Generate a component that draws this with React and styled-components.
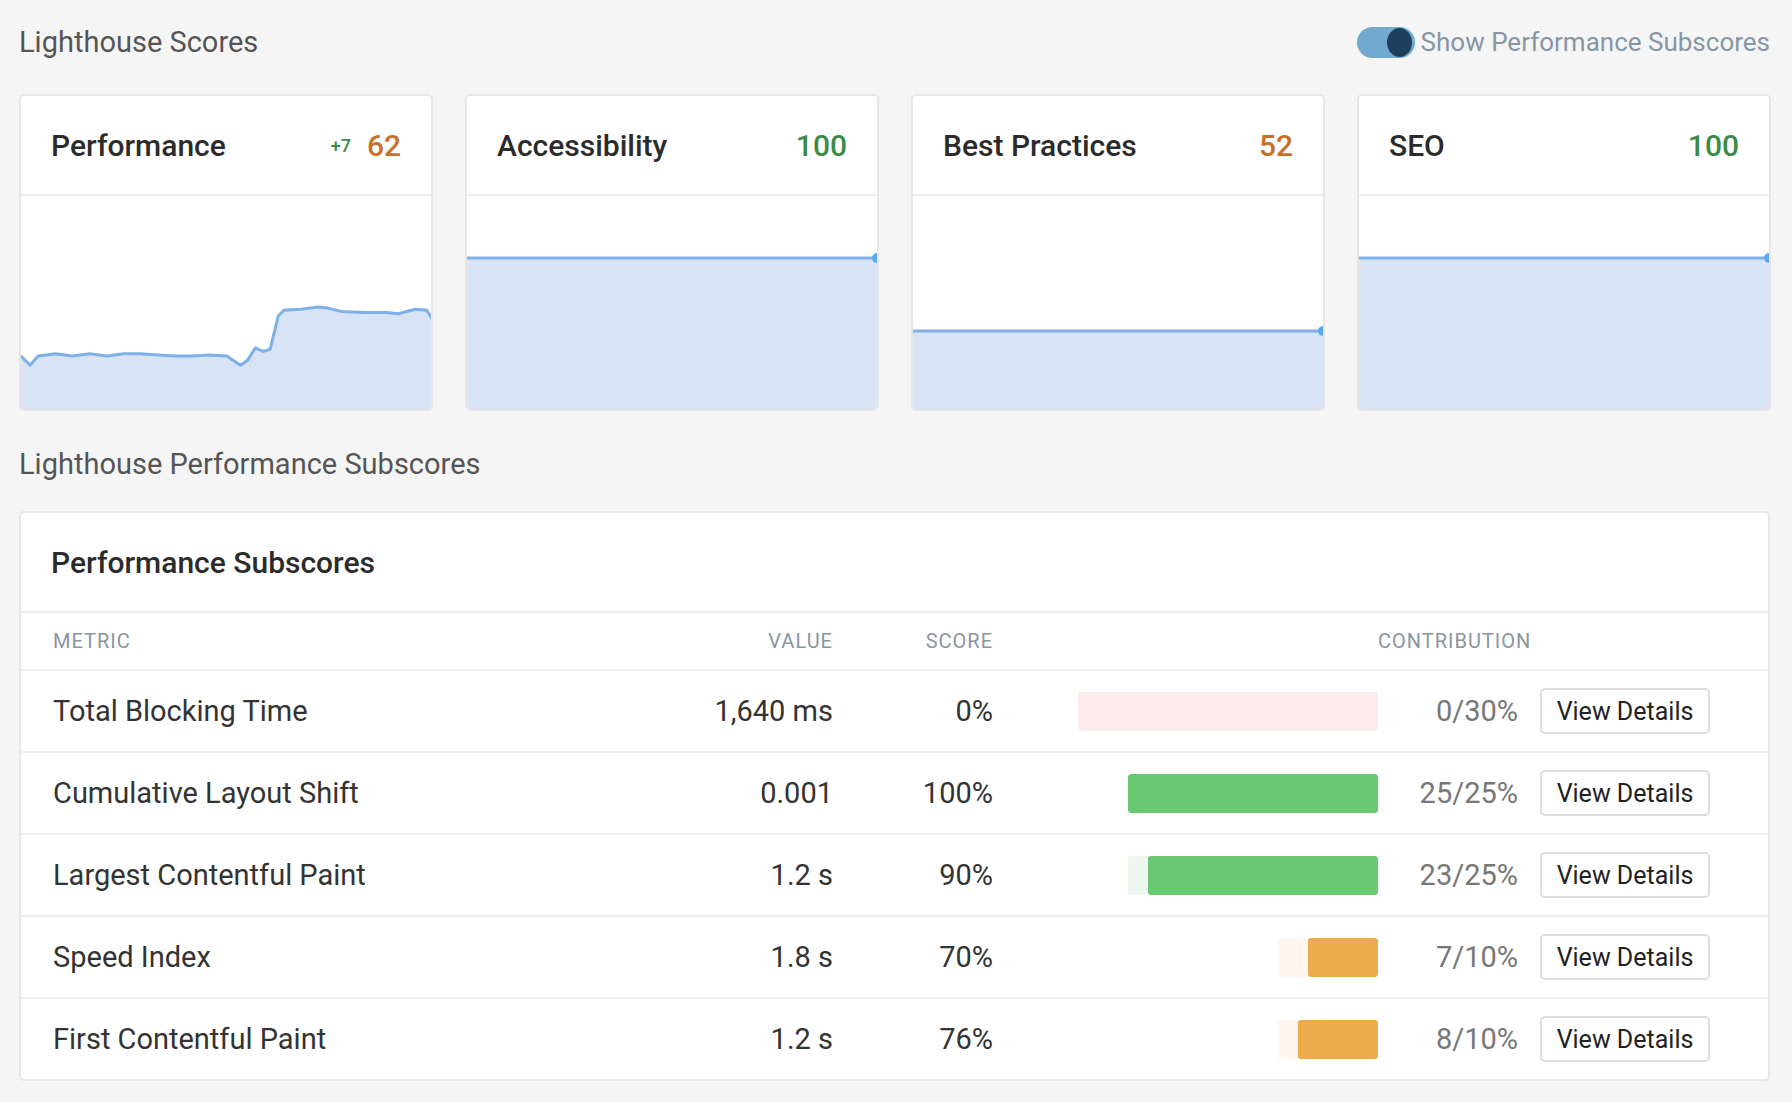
import React from "react";
import styled, { createGlobalStyle } from "styled-components";

const Global = createGlobalStyle`
  html, body { margin: 0; padding: 0; background: #f5f5f5; }
  body { font-family: Roboto, "Liberation Sans", sans-serif; color: #333; }
`;

const Page = styled.div`
  padding: 16px 22px 24px 19px;
  width: 1792px;
  box-sizing: border-box;
`;

const TopBar = styled.div`
  display: flex;
  justify-content: space-between;
  align-items: center;
  height: 52px;
`;

const SectionTitle = styled.h2`
  margin: 0;
  font-size: 29px;
  font-weight: 400;
  color: #555;
`;

const ToggleWrap = styled.label`
  display: flex;
  align-items: center;
  gap: 6px;
  font-size: 26px;
  color: #8896a4;
`;

const Track = styled.span`
  width: 58px;
  height: 31px;
  border-radius: 16px;
  background: #72a9cf;
  display: flex;
  align-items: center;
  justify-content: flex-end;
  padding: 0 3px;
  box-sizing: border-box;
`;

const Knob = styled.span`
  width: 25px;
  height: 29px;
  border-radius: 50%;
  background: #1e3f5e;
`;

const Cards = styled.div`
  display: grid;
  grid-template-columns: repeat(4, 414px);
  gap: 32px;
  margin-top: 26px;
`;

const Card = styled.div`
  background: #fff;
  border: 2px solid #e6e6e6;
  border-radius: 5px;
  overflow: hidden;
  height: 313px;
  display: flex;
  flex-direction: column;
`;

const CardHead = styled.div`
  height: 98px;
  flex: none;
  display: flex;
  align-items: center;
  padding: 0 30px;
  border-bottom: 2px solid #eee;
  font-size: 30px;
  font-weight: 500;
  color: #2b2b2b;
`;

const CardTitle = styled.span`
  flex: 1;
`;

const Delta = styled.span`
  font-size: 18px;
  color: #3a8a48;
  margin-right: 16px;
`;

const Score = styled.span`
  color: ${(p) => p.$c};
`;

const Chart = styled.svg`
  flex: 1;
  display: block;
  width: 100%;
`;

const SubTitle = styled(SectionTitle)`
  margin: 36px 0 30px;
`;

const Panel = styled.div`
  background: #fff;
  border: 2px solid #e6e6e6;
  border-radius: 5px;
`;

const PanelHead = styled.div`
  height: 98px;
  display: flex;
  align-items: center;
  padding: 0 30px;
  font-size: 30px;
  font-weight: 500;
  color: #2b2b2b;
  border-bottom: 2px solid #eee;
`;

const Row = styled.div`
  display: grid;
  grid-template-columns: 570px 210px 160px 385px 140px 223px;
  align-items: center;
  height: ${(p) => (p.$head ? "56px" : "80px")};
  padding-left: 32px;
  border-top: ${(p) => (p.$first ? "none" : "2px solid #eee")};
  font-size: ${(p) => (p.$head ? "20px" : "29px")};
  letter-spacing: ${(p) => (p.$head ? "1px" : "0")};
  color: ${(p) => (p.$head ? "#8a95a0" : "#333")};
`;

const Cell = styled.div`
  text-align: ${(p) => (p.$right ? "right" : "left")};
  color: ${(p) => p.$c || "inherit"};
`;

const BarCell = styled.div`
  display: flex;
  justify-content: flex-end;
`;

const BarTrack = styled.div`
  height: 39px;
  border-radius: 3px;
  background: ${(p) => p.$bg};
  display: flex;
  justify-content: flex-end;
  overflow: hidden;
`;

const BarFill = styled.div`
  height: 100%;
  border-radius: 3px;
  background: ${(p) => p.$c};
`;

const BtnCell = styled.div`
  display: flex;
  justify-content: flex-end;
  padding-right: 31px;
`;

const Button = styled.button`
  width: 170px;
  height: 46px;
  background: #fff;
  border: 2px solid #ddd;
  border-radius: 5px;
  font-family: Roboto, "Liberation Sans", sans-serif;
  font-size: 25px;
  color: #222;
`;

const perfPts = [
  [0, 140], [8, 148], [15, 140], [30, 138], [45, 140], [60, 138], [75, 140], [90, 138],
  [105, 138], [120, 139], [135, 140], [150, 140], [165, 139], [180, 140], [192, 148],
  [198, 144], [205, 133], [212, 136], [218, 134], [225, 105], [230, 100], [245, 99],
  [260, 97], [268, 98], [280, 101], [300, 102], [320, 102], [330, 103], [345, 99],
  [355, 100], [360, 108], [364, 110], [370, 106], [373, 104],
].map(([x, y]) => [x * 1.143, y * 1.143]);

function LineChart({ pts }) {
  const d = pts.map((p, i) => `${i ? "L" : "M"}${p[0].toFixed(1)},${p[1].toFixed(1)}`).join(" ");
  const last = pts[pts.length - 1];
  return (
    <Chart viewBox="0 0 410 213" preserveAspectRatio="none">
      <path d={`${d} L410,213 L0,213 Z`} fill="#d8e4f5" />
      <path d={d} fill="none" stroke="#7fb0e8" strokeWidth="3" strokeLinejoin="round" />
      <circle cx={last[0]} cy={last[1]} r="5" fill="#5aa7f0" />
    </Chart>
  );
}

const flat = (y) => [[0, y], [410, y]];

const cards = [
  { t: "Performance", s: 62, c: "#c8702a", delta: "+7", pts: perfPts },
  { t: "Accessibility", s: 100, c: "#3a8a48", pts: flat(62) },
  { t: "Best Practices", s: 52, c: "#c8702a", pts: flat(135) },
  { t: "SEO", s: 100, c: "#3a8a48", pts: flat(62) },
];

const rows = [
  { m: "Total Blocking Time", v: "1,640 ms", s: "0%", max: 30, got: 0, c: "#68c972", bg: "#fbeceb", txt: "0/30%" },
  { m: "Cumulative Layout Shift", v: "0.001", s: "100%", max: 25, got: 25, c: "#68c972", bg: "#eef8f1", txt: "25/25%" },
  { m: "Largest Contentful Paint", v: "1.2 s", s: "90%", max: 25, got: 23, c: "#68c972", bg: "#eef8f1", txt: "23/25%" },
  { m: "Speed Index", v: "1.8 s", s: "70%", max: 10, got: 7, c: "#edab4c", bg: "#fef6ef", txt: "7/10%" },
  { m: "First Contentful Paint", v: "1.2 s", s: "76%", max: 10, got: 8, c: "#edab4c", bg: "#fef6ef", txt: "8/10%" },
];

export default function App() {
  return (
    <Page>
      <Global />
      <TopBar>
        <SectionTitle>Lighthouse Scores</SectionTitle>
        <ToggleWrap>
          <Track><Knob /></Track>
          Show Performance Subscores
        </ToggleWrap>
      </TopBar>
      <Cards>
        {cards.map((c) => (
          <Card key={c.t}>
            <CardHead>
              <CardTitle>{c.t}</CardTitle>
              {c.delta && <Delta>{c.delta}</Delta>}
              <Score $c={c.c}>{c.s}</Score>
            </CardHead>
            <LineChart pts={c.pts} />
          </Card>
        ))}
      </Cards>
      <SubTitle>Lighthouse Performance Subscores</SubTitle>
      <Panel>
        <PanelHead>Performance Subscores</PanelHead>
        <Row $head $first>
          <Cell>METRIC</Cell>
          <Cell $right>VALUE</Cell>
          <Cell $right>SCORE</Cell>
          <div />
          <Cell $right>CONTRIBUTION</Cell>
          <div />
        </Row>
        {rows.map((r) => (
          <Row key={r.m}>
            <Cell>{r.m}</Cell>
            <Cell $right>{r.v}</Cell>
            <Cell $right>{r.s}</Cell>
            <BarCell>
              <BarTrack $bg={r.bg} style={{ width: r.max * 10 }}>
                <BarFill $c={r.c} style={{ width: r.got * 10 }} />
              </BarTrack>
            </BarCell>
            <Cell $right $c="#777">{r.txt}</Cell>
            <BtnCell><Button>View Details</Button></BtnCell>
          </Row>
        ))}
      </Panel>
    </Page>
  );
}
